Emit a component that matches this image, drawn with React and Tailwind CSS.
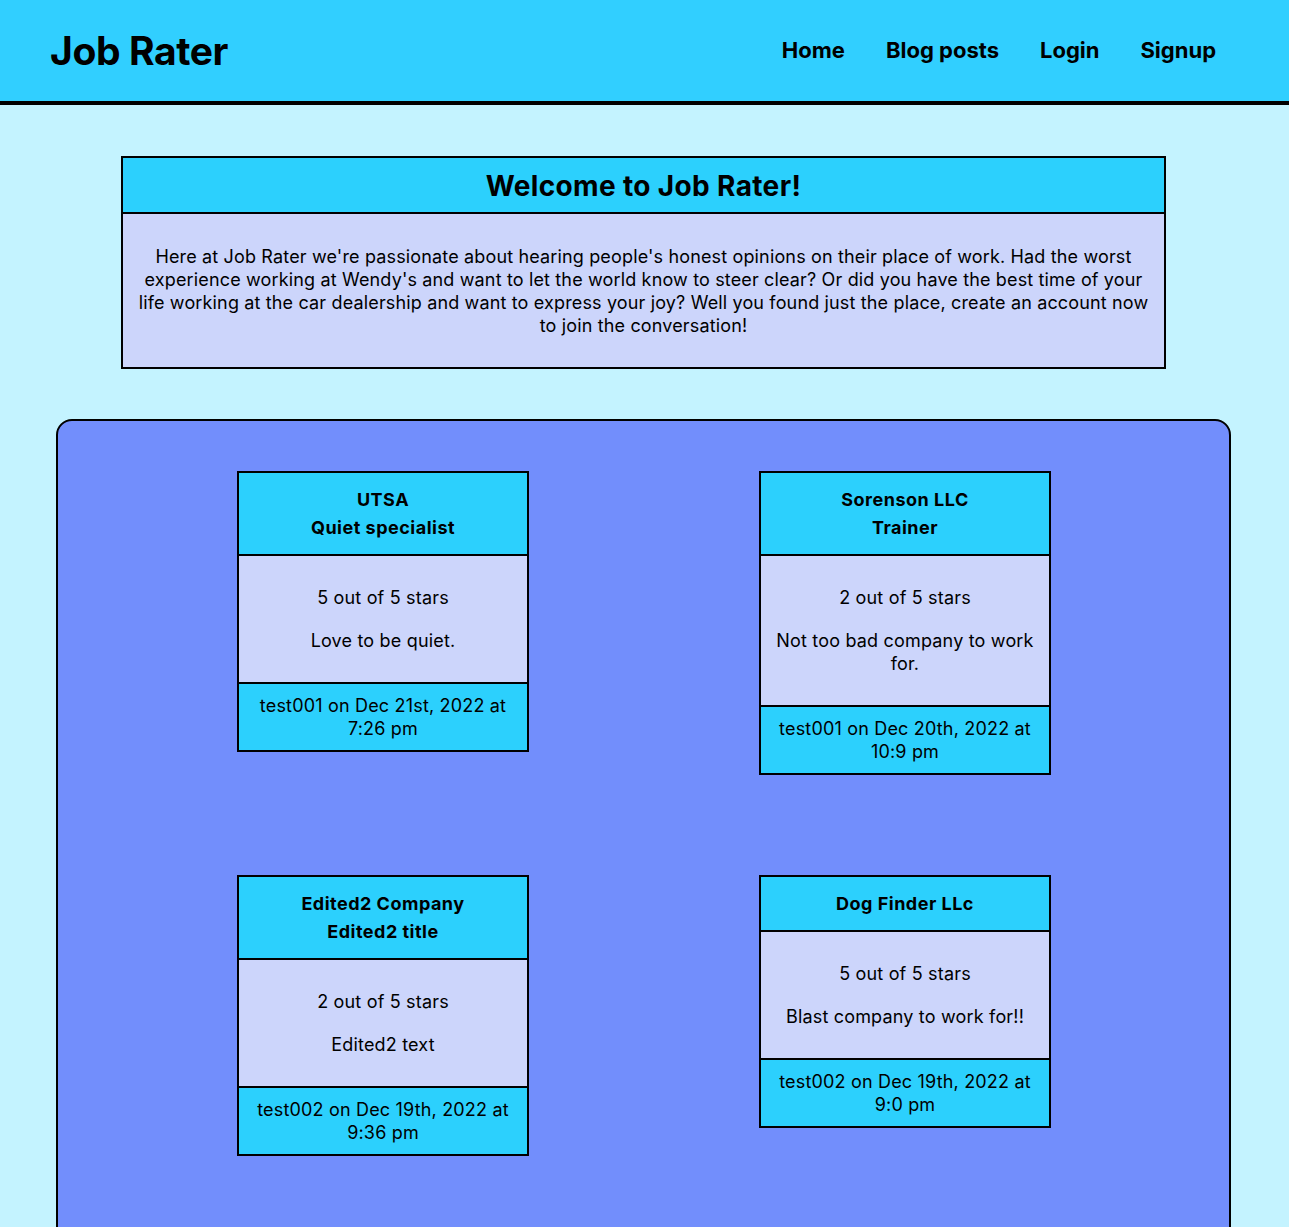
const reviews = [
    {
        company: "UTSA",
        title: "Quiet specialist",
        stars: 5,
        text: "Love to be quiet.",
        footer: "test001 on Dec 21st, 2022 at 7:26 pm"
    },
    {
        company: "Sorenson LLC",
        title: "Trainer",
        stars: 2,
        text: "Not too bad company to work for.",
        footer: "test001 on Dec 20th, 2022 at 10:9 pm"
    },
    {
        company: "Edited2 Company",
        title: "Edited2 title",
        stars: 2,
        text: "Edited2 text",
        footer: "test002 on Dec 19th, 2022 at 9:36 pm"
    },
    {
        company: "Dog Finder LLc",
        title: "",
        stars: 5,
        text: "Blast company to work for!!",
        footer: "test002 on Dec 19th, 2022 at 9:0 pm"
    }
];

const ReviewCard = ({ review }) => {
    return (
        <div className="w-[292px] border-2 border-black text-center text-[18px] leading-[23px] tracking-[0.18px] text-black">
            <div className="bg-[#2cd0fd] px-[12px] pt-[13px] pb-[12px] font-bold leading-[28px] tracking-[0.5px] border-b-2 border-black">
                <div>{review.company}</div>
                {review.title && <div>{review.title}</div>}
            </div>
            <div className="bg-[#ccd5fb] px-[12px] py-[30px] flex flex-col gap-[20px]">
                <p>{review.stars} out of 5 stars</p>
                <p>{review.text}</p>
            </div>
            <div className="bg-[#2cd0fd] px-[12px] py-[10px] border-t-2 border-black">
                {review.footer}
            </div>
        </div>
    );
};

const App = () => {
    return (
        <div className="min-h-screen bg-[#c4f3ff] font-['Inter','Liberation_Sans',sans-serif] text-black">
            {/* Header */}
            <header className="h-[105px] bg-[#31cfff] border-b-4 border-black flex items-center justify-between pl-[50px] pr-[73px]">
                <h1 className="text-[39px] font-bold tracking-[-0.4px] mt-[2px]">Job Rater</h1>
                <nav className="flex gap-[41px] text-[22px] font-bold">
                    <a href="#">Home</a>
                    <a href="#">Blog posts</a>
                    <a href="#">Login</a>
                    <a href="#">Signup</a>
                </nav>
            </header>

            {/* Welcome */}
            <section className="w-[1045px] ml-[121px] mt-[51px] border-2 border-black">
                <h2 className="bg-[#2cd0fd] text-center text-[28px] font-bold leading-[34px] tracking-[0.35px] pt-[11px] pb-[9px] border-b-2 border-black">
                    Welcome to Job Rater!
                </h2>
                <p className="bg-[#ccd5fb] px-[6px] pt-[31px] pb-[30px] text-center text-[18px] leading-[23px] tracking-[0.15px]">
                    Here at Job Rater we're passionate about hearing people's honest opinions on their place of work. Had the worst experience working at Wendy's and want to let the world know to steer clear? Or did you have the best time of your life working at the car dealership and want to express your joy? Well you found just the place, create an account now to join the conversation!
                </p>
            </section>

            {/* Reviews */}
            <main className="w-[1175px] ml-[56px] mt-[50px] bg-[#728efc] border-2 border-black rounded-[16px] pt-[50px] pb-[120px] pl-[179px]">
                <div className="grid grid-cols-[292px_292px] gap-x-[230px] gap-y-[100px] items-start">
                    {reviews.map((review, index) => (
                        <ReviewCard key={index} review={review} />
                    ))}
                </div>
            </main>
        </div>
    );
};

export default App;
